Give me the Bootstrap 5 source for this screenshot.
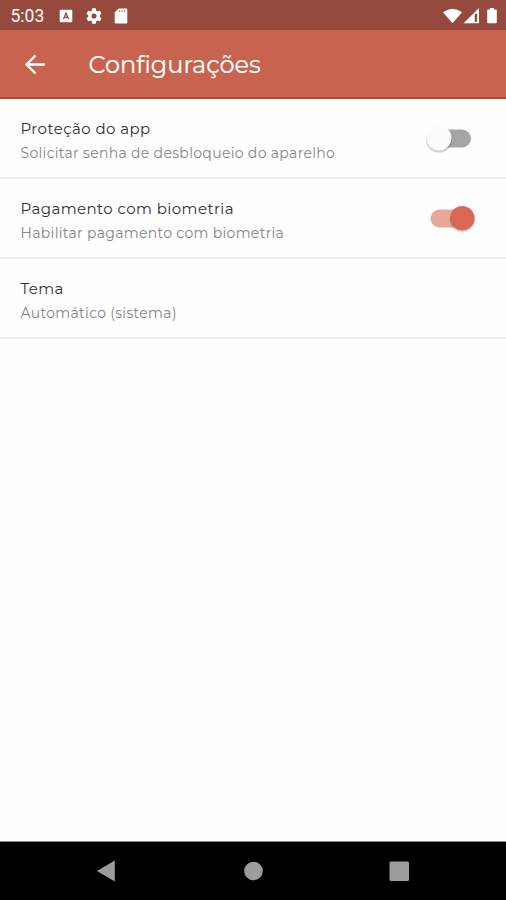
<!DOCTYPE html>
<html lang="pt-BR">
<head>
<meta charset="utf-8">
<meta name="viewport" content="width=device-width, initial-scale=1">
<title>Configurações</title>
<link href="https://cdn.jsdelivr.net/npm/bootstrap@5.3.0/dist/css/bootstrap.min.css" rel="stylesheet">
<style>
body { font-family: Montserrat, Inter, sans-serif; background: #fefefe; }
.status-bar { height: 30px; background: #954a3d; padding: 1px 8px 0 10.5px; }
.clock { font: 400 17.5px/30px Roboto, sans-serif; width: 48.5px; }
.status-icons { gap: 12.5px; }
.app-bar { height: 69px; background: #c86350; border-bottom: 2px solid #b9472c; padding-left: 22px; }
.back-btn { width: 26px; height: 26px; margin-right: 40.5px; }
.app-title { font-size: 24px; line-height: 30px; font-weight: 400; padding-top: 3px; -webkit-text-stroke: .2px #fff; }
.setting { height: 80px; padding: 18px 30px 0 20.5px; border-bottom: 2px solid #ededed; }
.setting-name { font-size: 15px; line-height: 24px; color: #303030; letter-spacing: .42px; }
.setting-info { font-size: 14px; line-height: 25px; color: #858585; letter-spacing: .32px; }
.toggle { width: 52px; height: 32px; margin-top: 5px; }
.nav-bar { height: 59px; background: #000; border-top: 1px solid #8a8a8a; }
</style>
</head>
<body>
<div class="d-flex flex-column vh-100 overflow-hidden">
  <header class="text-white">
    <div class="status-bar d-flex align-items-center">
      <span class="clock">5:03</span>
      <div class="status-icons d-flex align-items-center me-auto">
        <svg width="14" height="14" viewBox="0 0 14 14"><rect x=".7" y=".7" width="12.6" height="12.6" rx="1" fill="#fff"/><path d="M4.500 10 7 4.200 9.500 10M5.400 8.400h3.200" fill="none" stroke="#954a3d" stroke-width="1.300"/></svg>
        <svg width="16" height="16" viewBox="2 2 20 20" fill="#fff"><path d="M19.140 12.940c.040-.300.060-.610.060-.940s-.020-.640-.070-.940l2.030-1.580a.490.490 0 0 0 .120-.610l-1.920-3.320a.490.490 0 0 0-.590-.220l-2.390.960a7 7 0 0 0-1.620-.940l-.360-2.540a.480.480 0 0 0-.480-.410h-3.840a.470.470 0 0 0-.470.410l-.360 2.540a7 7 0 0 0-1.620.940l-2.390-.960a.480.480 0 0 0-.590.220L2.740 8.870a.480.480 0 0 0 .120.610l2.030 1.580a6 6 0 0 0 0 1.880l-2.030 1.580a.490.490 0 0 0-.120.610l1.920 3.320c.120.220.370.290.590.220l2.390-.960c.500.380 1.030.700 1.620.940l.360 2.540c.050.240.240.410.480.410h3.840c.240 0 .440-.170.470-.410l.360-2.540a7 7 0 0 0 1.620-.940l2.390.960c.220.080.470 0 .590-.220l1.920-3.320a.480.480 0 0 0-.120-.610zM12 15.200a3.200 3.200 0 1 1 0-6.400 3.200 3.200 0 0 1 0 6.400z"/></svg>
        <svg width="14" height="16" viewBox="0 0 14 16"><path d="M4.500.5H12q1.300 0 1.300 1.300v12.400q0 1.300-1.300 1.300H2Q.7 15.500.7 14.200V4.500z" fill="#fff"/><path d="M5.500 2.200v2M8 2.200v2M10.500 2.200v2" stroke="#954a3d" stroke-opacity=".65" stroke-width="1.200"/></svg>
      </div>
      <svg width="55" height="18" viewBox="0 0 55 18" fill="#fff"><path d="M0 5.300Q9.500-1.800 19 5.300L9.500 16.200z"/><path fill-rule="evenodd" d="M36 1v15.300H20.500zM34.200 6.800h-2.500v8h2.500z"/><path d="M46.800 1h4.200v1.500h2q.8 0 .8.800v12.200q0 .8-.8.800h-8q-.8 0-.8-.8V3.300q0-.8.800-.8h1.800z"/></svg>
    </div>
    <div class="app-bar d-flex align-items-center">
      <button class="back-btn btn p-0 border-0 d-flex" aria-label="Voltar"><svg width="26" height="26" viewBox="0 0 26 26"><path d="M22.800 13.500H4.500M13.500 4.500 4.500 13.500l9 9" fill="none" stroke="#fff" stroke-width="2.400"/></svg></button>
      <h1 class="app-title mb-0"><span>Configurações</span></h1>
    </div>
  </header>
  <main class="flex-grow-1">
    <div class="setting d-flex justify-content-between">
      <div><div class="setting-name"><span>Proteção do app</span></div><div class="setting-info"><span>Solicitar senha de desbloqueio do aparelho</span></div></div>
      <svg class="toggle" viewBox="0 0 52 32"><rect x="6" y="7.500" width="41" height="18" rx="9" fill="#a5a5a5"/><circle cx="15" cy="18" r="13" fill="#000" opacity=".10"/><circle cx="15" cy="17.200" r="12.700" fill="#000" opacity=".1"/><circle cx="15" cy="16" r="12.500" fill="#fcfcfc"/></svg>
    </div>
    <div class="setting d-flex justify-content-between">
      <div><div class="setting-name"><span>Pagamento com biometria</span></div><div class="setting-info"><span>Habilitar pagamento com biometria</span></div></div>
      <svg class="toggle" viewBox="0 0 52 32"><rect x="6.500" y="7.500" width="41" height="18" rx="9" fill="#eba69c"/><circle cx="38.300" cy="18" r="12.700" fill="#000" opacity=".08"/><circle cx="38.300" cy="17.200" r="12.500" fill="#000" opacity=".1"/><circle cx="38.300" cy="16.200" r="12.200" fill="#d96753"/></svg>
    </div>
    <div class="setting d-flex justify-content-between">
      <div><div class="setting-name"><span>Tema</span></div><div class="setting-info"><span>Automático (sistema)</span></div></div>
    </div>
  </main>
  <nav class="nav-bar">
    <svg class="d-block" width="506" height="58" viewBox="0 0 506 58" fill="#9c9c9c"><path d="M97 29 114.800 18.500v21z"/><circle cx="253.500" cy="29" r="9.300"/><rect x="389.500" y="19.500" width="19.500" height="19.500" rx="1.500"/></svg>
  </nav>
</div>
<script src="https://cdn.jsdelivr.net/npm/bootstrap@5.3.0/dist/js/bootstrap.bundle.min.js"></script>
</body>
</html>
